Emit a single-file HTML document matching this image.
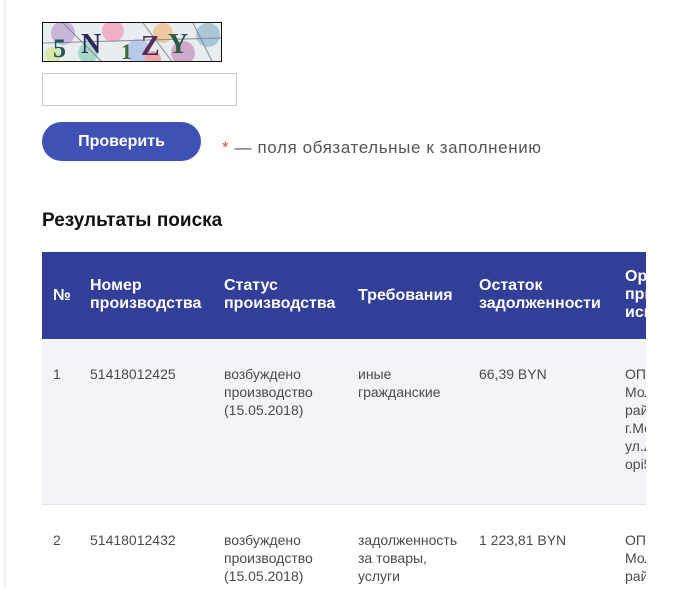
<!DOCTYPE html>
<html><head><meta charset="utf-8"><style>
*{margin:0;padding:0;box-sizing:border-box}
body{width:682px;height:587px;background:#fff;position:relative;overflow:hidden;font-family:"Liberation Sans","DejaVu Sans",sans-serif;color:#444}
.a{position:absolute;white-space:nowrap}
.vl{position:absolute;left:4px;top:0;width:2px;height:587px;background:#f0f0f0}
.cap{position:absolute;left:42px;top:22px;width:180px;height:40px;border:1px solid #111;overflow:hidden;background:#e8eef0}
.inp{position:absolute;left:42px;top:73px;width:195px;height:33px;border:1px solid #c8c8c8;background:#fff}
.btn{position:absolute;left:42px;top:122px;width:159px;height:39px;border-radius:20px;background:#3f51b5;color:#fff;font-weight:bold;font-size:16px;text-align:center;line-height:40px}
.tbl{position:absolute;left:42px;top:252px;width:604px;height:340px;overflow:hidden}
.hd{position:absolute;left:0;top:0;width:604px;height:87px;background:#323f99}
.r1{position:absolute;left:0;top:87px;width:604px;height:166px;background:#f3f4f8;border-bottom:1px solid #e2e3e8}
.h{position:absolute;color:#fff;font-weight:bold;font-size:16px;line-height:18px;white-space:nowrap}
.d{position:absolute;font-size:14px;line-height:18px;color:#4a4a4a;white-space:nowrap}
</style></head><body>
<div class="vl"></div>
<div class="cap"><svg width="180" height="40">
<circle cx="20" cy="10" r="12" fill="#c9b6d8"/><circle cx="45" cy="30" r="10" fill="#a8d8c8"/><circle cx="70" cy="8" r="11" fill="#f0b0c8"/><circle cx="95" cy="28" r="12" fill="#b8c8e8"/><circle cx="120" cy="10" r="10" fill="#f0c8a0"/><circle cx="140" cy="30" r="12" fill="#d0a8c8"/><circle cx="165" cy="12" r="12" fill="#a8c8d8"/><circle cx="10" cy="32" r="8" fill="#d8e8a8"/><circle cx="110" cy="36" r="8" fill="#e8a8a8"/>
<path d="M0 20L180 15M20 0L60 40M100 0L130 40M150 0L170 40" stroke="#889" stroke-width="1"/>
<text x="10" y="34" font-family="Liberation Serif" font-size="26" font-weight="bold" fill="#1a5a5a">5</text>
<text x="38" y="30" font-family="Liberation Serif" font-size="28" font-weight="bold" fill="#2a2a5a">N</text>
<text x="78" y="36" font-family="Liberation Serif" font-size="22" font-weight="bold" fill="#3a6a3a">1</text>
<text x="98" y="32" font-family="Liberation Serif" font-size="28" font-weight="bold" fill="#5a2a5a">Z</text>
<text x="125" y="30" font-family="Liberation Serif" font-size="28" font-weight="bold" fill="#2a5a4a">Y</text>
</svg></div>
<div class="inp"></div>
<div class="btn">Проверить</div>
<div class="a" style="left:222px;top:138px;font-size:17px;letter-spacing:0.6px;color:#555"><span style="color:#d9534f">*</span> — поля обязательные к заполнению</div>
<div class="a" style="left:42px;top:210px;font-size:19px;font-weight:bold;color:#111">Результаты поиска</div>
<div class="tbl">
<div class="hd"></div>
<div class="h" style="left:11px;top:35px">№</div>
<div class="h" style="left:48px;top:25px">Номер<br>производства</div>
<div class="h" style="left:182px;top:25px">Статус<br>производства</div>
<div class="h" style="left:316px;top:35px">Требования</div>
<div class="h" style="left:437px;top:25px">Остаток<br>задолженности</div>
<div class="h" style="left:583px;top:16px">Орган<br>принудит.<br>исполнения</div>
<div class="r1"></div>
<div class="d" style="left:11px;top:113px">1</div>
<div class="d" style="left:48px;top:113px">51418012425</div>
<div class="d" style="left:182px;top:113px">возбуждено<br>производство<br>(15.05.2018)</div>
<div class="d" style="left:316px;top:113px">иные<br>гражданские</div>
<div class="d" style="left:437px;top:113px">66,39 BYN</div>
<div class="d" style="left:583px;top:113px">ОПИ<br>Молодечн.<br>района<br>г.Молодечно<br>ул.Л<br>opi5</div>
<div class="d" style="left:11px;top:279px">2</div>
<div class="d" style="left:48px;top:279px">51418012432</div>
<div class="d" style="left:182px;top:279px">возбуждено<br>производство<br>(15.05.2018)</div>
<div class="d" style="left:316px;top:279px">задолженность<br>за товары,<br>услуги</div>
<div class="d" style="left:437px;top:279px">1 223,81 BYN</div>
<div class="d" style="left:583px;top:279px">ОПИ<br>Молодечн.<br>района</div>
</div>
</body></html>
